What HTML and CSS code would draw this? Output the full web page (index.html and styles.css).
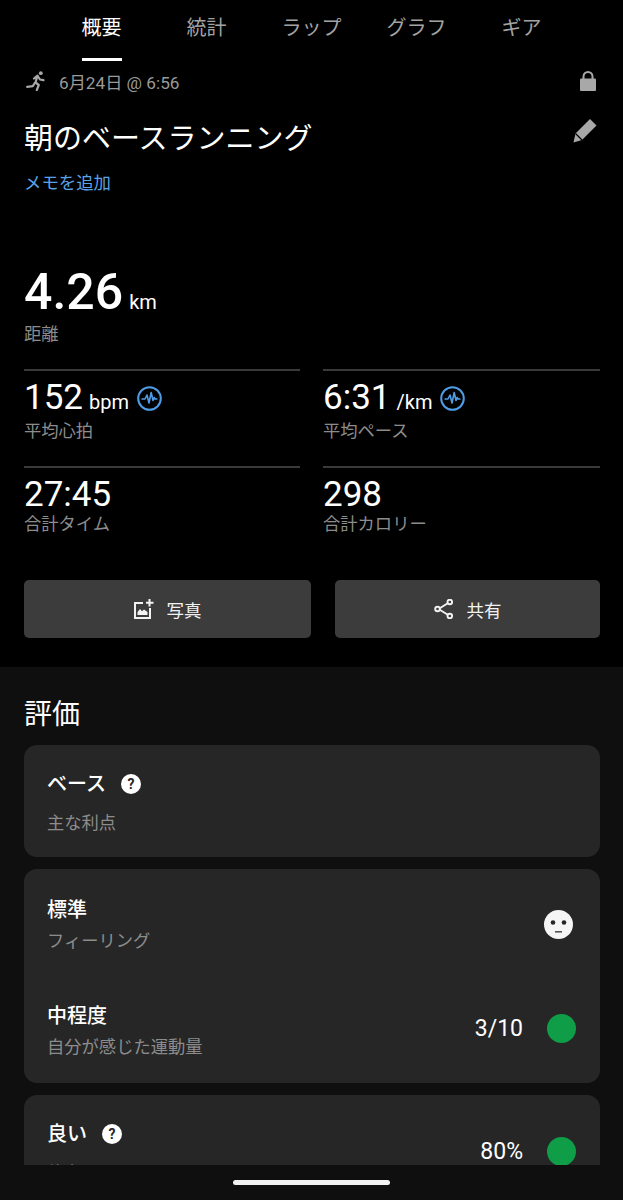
FILE: index.html
```html
<!DOCTYPE html>
<html lang="ja">
<head>
    <meta charset="UTF-8">
    <meta name="viewport" content="width=device-width, initial-scale=1.0">
    <title>朝のベースランニング</title>
    <link rel="stylesheet" href="styles.css">
</head>
<body>
    <div class="screen">
        <div class="scroll-area">
            <section class="summary">
                <nav class="tabs">
                    <a class="tab active"><span>概要</span></a>
                    <a class="tab"><span>統計</span></a>
                    <a class="tab"><span>ラップ</span></a>
                    <a class="tab"><span>グラフ</span></a>
                    <a class="tab"><span>ギア</span></a>
                </nav>

                <div class="meta-row">
                    <svg class="run-icon" viewBox="0 0 20 20" fill="none" stroke="#a8a8a8" stroke-width="2.2" stroke-linecap="round" stroke-linejoin="round">
                        <circle cx="14.8" cy="2.2" r="1.9" fill="#a8a8a8" stroke="none"/>
                        <path d="M8 7.5 L11.5 4.6 L9.5 11.5 L12.8 14 L10.8 19"/>
                        <path d="M8.8 12 L6.8 15.2 L1.2 15.8"/>
                        <path d="M12 5.5 L14 8.5 L17.5 9.2"/>
                    </svg>
                    <span class="meta-date">6月24日 @ 6:56</span>
                    <svg class="lock-icon" viewBox="0 0 16 20">
                        <path d="M3.5 8 V5.5 a4.5 4.5 0 0 1 9 0 V8" fill="none" stroke="#a8a8a8" stroke-width="2"/>
                        <rect x="0" y="7.5" width="16" height="12.5" rx="1" fill="#a8a8a8"/>
                    </svg>
                </div>

                <div class="title-row">
                    <h1 class="title">朝のベースランニング</h1>
                    <svg class="pencil-icon" viewBox="0 0 24 25">
                        <path d="M0.5 24.5 L2.5 15.5 L17 1 L23.5 7.5 L9 22 Z" fill="#a8a8a8"/>
                        <path d="M2.5 15.5 L9 22" stroke="#000" stroke-width="1.2"/>
                    </svg>
                </div>
                <a class="add-memo">メモを追加</a>

                <div class="distance">
                    <div class="distance-value">4.26<span class="distance-unit">km</span></div>
                    <div class="label">距離</div>
                </div>

                <div class="stats">
                    <div class="stat">
                        <div class="stat-value">152<span class="unit">bpm</span>
                            <svg class="pulse-icon" viewBox="0 0 25 25" fill="none" stroke="#4f9de6">
                                <circle cx="12.5" cy="12.5" r="11.3" stroke-width="2"/>
                                <path d="M4.5 13 H8 L10 9 L12 17 L14.2 6.5 L16 14.5 L17.2 11.5 L18 13 H20.5" stroke-width="1.6" stroke-linejoin="round"/>
                            </svg>
                        </div>
                        <div class="label">平均心拍</div>
                    </div>
                    <div class="stat">
                        <div class="stat-value">6:31<span class="unit">/km</span>
                            <svg class="pulse-icon" viewBox="0 0 25 25" fill="none" stroke="#4f9de6">
                                <circle cx="12.5" cy="12.5" r="11.3" stroke-width="2"/>
                                <path d="M4.5 13 H8 L10 9 L12 17 L14.2 6.5 L16 14.5 L17.2 11.5 L18 13 H20.5" stroke-width="1.6" stroke-linejoin="round"/>
                            </svg>
                        </div>
                        <div class="label">平均ペース</div>
                    </div>
                    <div class="stat">
                        <div class="stat-value">27:45</div>
                        <div class="label">合計タイム</div>
                    </div>
                    <div class="stat">
                        <div class="stat-value">298</div>
                        <div class="label">合計カロリー</div>
                    </div>
                </div>

                <div class="actions">
                    <button class="action-button">
                        <svg class="action-icon" viewBox="0 0 20 20" fill="none" stroke="#f2f2f2" stroke-width="2">
                            <path d="M9 4 H1 V19 H16 V9"/>
                            <path d="M15.5 0 V7.5 M12 3.7 H19.5"/>
                            <path d="M3.5 16 V13 L6 10 L8 12.2 L10 10.5 L13.5 13 V16 Z" fill="#f2f2f2" stroke="none"/>
                        </svg>
                        写真
                    </button>
                    <button class="action-button">
                        <svg class="action-icon" viewBox="0 0 20 20" fill="none" stroke="#f2f2f2" stroke-width="1.9">
                            <path d="M4.5 10 L15 3.5 M4.5 10 L15 16.5"/>
                            <circle cx="3.5" cy="10" r="2.3" fill="#3c3c3c"/>
                            <circle cx="15.8" cy="3" r="2.3" fill="#3c3c3c"/>
                            <circle cx="15.8" cy="17" r="2.3" fill="#3c3c3c"/>
                        </svg>
                        共有
                    </button>
                </div>
            </section>

            <section class="evaluation">
                <h2 class="section-title">評価</h2>

                <div class="card card-base">
                    <div class="row-title">ベース <span class="help">?</span></div>
                    <div class="label">主な利点</div>
                </div>

                <div class="card card-feel">
                    <div class="eval-row">
                        <div>
                            <div class="row-title">標準</div>
                            <div class="label">フィーリング</div>
                        </div>
                        <svg class="face-icon" viewBox="0 0 29 29">
                            <circle cx="14.5" cy="14.5" r="14.5" fill="#f5f5f5"/>
                            <circle cx="9" cy="12.5" r="2.3" fill="#262626"/>
                            <circle cx="20" cy="12.5" r="2.3" fill="#262626"/>
                            <rect x="11" y="21" width="7" height="1.6" fill="#555"/>
                        </svg>
                    </div>
                    <div class="eval-row eval-row-effort">
                        <div>
                            <div class="row-title">中程度</div>
                            <div class="label">自分が感じた運動量</div>
                        </div>
                        <div class="score">3/10<span class="dot"></span></div>
                    </div>
                </div>

                <div class="card card-stamina">
                    <div class="eval-row">
                        <div>
                            <div class="row-title">良い <span class="help">?</span></div>
                            <div class="label stamina-label">体力</div>
                        </div>
                        <div class="score score-stamina">80%<span class="dot"></span></div>
                    </div>
                </div>
            </section>
        </div>

        <div class="nav-bar"><div class="home-indicator"></div></div>
    </div>
</body>
</html>
```

FILE: styles.css
```css
* {
    box-sizing: border-box;
}

body {
    margin: 0;
    background: #000;
    color: #fff;
    font-family: Roboto, "Noto Sans CJK JP", sans-serif;
}

.screen {
    height: 1200px;
    display: flex;
    flex-direction: column;
    overflow: hidden;
    background: #0f0f0f;
}

.scroll-area {
    flex: 1;
    overflow: hidden;
}

.summary {
    height: 667px;
    background: #000;
}

/* tabs */
.tabs {
    display: grid;
    grid-template-columns: repeat(5, 105px);
    padding-left: 49px;
    height: 61px;
}

.tab {
    text-align: center;
    color: #a3a3a3;
    font-size: 20px;
}

.tab span {
    display: inline-block;
    height: 61px;
    line-height: 56px;
}

.tab.active {
    color: #fff;
}

.tab.active span {
    border-bottom: 3px solid #fff;
}

/* date + title */
.meta-row {
    display: flex;
    align-items: center;
    height: 40px;
    padding: 0 27px 0 26px;
}

.run-icon {
    width: 20px;
    height: 20px;
    margin-right: 13px;
}

.meta-date {
    flex: 1;
    color: #9a9a9a;
    font-size: 17.2px;
}

.lock-icon {
    width: 16px;
    height: 20px;
}

.title-row {
    display: flex;
    justify-content: space-between;
    align-items: flex-start;
    padding: 18px 26px 0 24px;
}

.title {
    margin: 0;
    font-size: 29px;
    font-weight: 400;
    line-height: 40px;
}

.pencil-icon {
    width: 24px;
    height: 25px;
    margin-top: -1px;
}

.add-memo {
    display: block;
    margin: 12px 0 0 24px;
    color: #5ba2e6;
    font-size: 17.4px;
    line-height: 24px;
}

.label {
    color: #8c8c8c;
    font-size: 17.3px;
    line-height: 24px;
}

/* distance and stats */
.distance {
    padding: 67px 24px 0;
}

.distance-value {
    font-size: 50px;
    font-weight: 500;
    line-height: 60px;
}

.distance-unit {
    margin-left: 6px;
    font-size: 20px;
    font-weight: 400;
}

.distance .label {
    margin-top: -10px;
}

.stats {
    display: grid;
    grid-template-columns: 276px 277px;
    column-gap: 23px;
    margin: 23px 0 0 24px;
}

.stat {
    height: 97px;
    padding-top: 2px;
    border-top: 2px solid #3a3a3a;
}

.stat-value {
    display: flex;
    align-items: baseline;
    font-size: 35px;
    line-height: 50px;
}

.stat .label {
    margin-top: -8px;
}

.unit {
    margin-left: 6px;
    font-size: 20px;
}

.pulse-icon {
    width: 25px;
    height: 25px;
    margin-left: 8px;
    align-self: center;
    margin-top: -3px;
}

/* buttons */
.actions {
    display: grid;
    grid-template-columns: 287px 265px;
    column-gap: 24px;
    margin: 17px 0 0 24px;
}

.action-button {
    display: flex;
    justify-content: center;
    align-items: center;
    height: 58px;
    border: 0;
    border-radius: 5px;
    background: #3c3c3c;
    color: #f2f2f2;
    font-family: inherit;
    font-size: 17.5px;
}

.action-icon {
    width: 20px;
    height: 20px;
    margin-right: 13px;
}

/* evaluation cards */
.evaluation {
    padding: 0 23px 0 24px;
}

.section-title {
    margin: 0;
    padding-top: 28px;
    font-size: 28px;
    font-weight: 400;
    line-height: 40px;
}

.card {
    margin-top: 12px;
    padding: 0 24px 0 23px;
    border-radius: 13px;
    background: #262626;
}

.section-title + .card {
    margin-top: 10px;
}

.card-base {
    height: 112px;
    padding-top: 24px;
}

.card-base .label {
    margin-top: 12px;
}

.card-feel {
    height: 214px;
    padding-top: 26px;
}

.card-stamina {
    height: 120px;
    padding-top: 24px;
}

.row-title {
    display: flex;
    align-items: center;
    gap: 15px;
    font-size: 20px;
    font-weight: 500;
    line-height: 30px;
}

.help {
    display: inline-block;
    width: 20px;
    height: 20px;
    border-radius: 50%;
    background: #fff;
    color: #262626;
    font-size: 14px;
    font-weight: 700;
    line-height: 20px;
    text-align: center;
}

.eval-row {
    display: flex;
    justify-content: space-between;
    align-items: center;
}

.eval-row .label {
    margin-top: 4px;
}

.eval-row-effort {
    margin-top: 48px;
}

.face-icon {
    width: 29px;
    height: 29px;
    margin-right: 3px;
}

.score {
    display: flex;
    align-items: center;
    margin-bottom: 4px;
    font-size: 23px;
}

.eval-row .stamina-label {
    margin-top: 12px;
}

.score-stamina {
    margin-top: -2px;
    margin-bottom: 0;
}

.dot {
    width: 29px;
    height: 29px;
    margin-left: 24px;
    border-radius: 50%;
    background: #0f9d48;
}

/* bottom bar */
.nav-bar {
    flex: none;
    height: 35px;
    padding-top: 15px;
    background: #0f0f0f;
}

.home-indicator {
    width: 157px;
    height: 5px;
    margin: 0 auto;
    border-radius: 3px;
    background: #f2f2f2;
}
```
